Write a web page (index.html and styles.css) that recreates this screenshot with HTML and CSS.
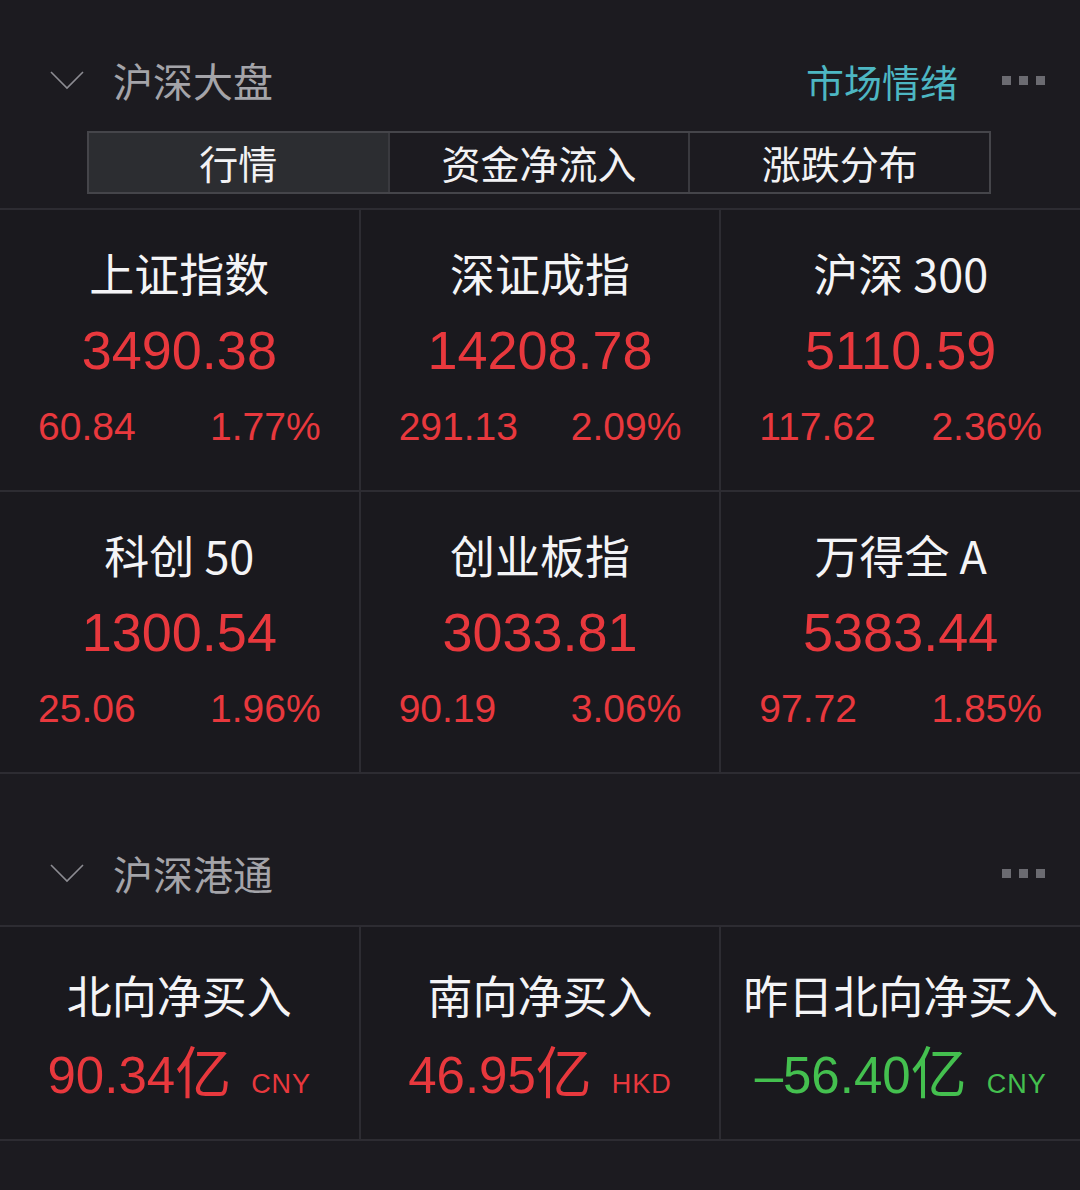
FILE: index.html
```html
<!DOCTYPE html>
<html lang="zh-CN">
<head>
    <meta charset="UTF-8">
    <title>沪深大盘</title>
    <link rel="stylesheet" href="styles.css">
</head>
<body>
<div class="sec-head first">
    <svg class="chev" width="34" height="20" viewBox="0 0 34 20"><polyline points="1,2 17,18 33,2" fill="none" stroke="#8c8c92" stroke-width="1.6"/></svg>
    <span class="sec-title">沪深大盘</span>
    <span class="sec-link">市场情绪</span>
    <span class="dots"><i></i><i></i><i></i></span>
</div>

<ul class="tabs">
    <li class="cur">行情</li>
    <li>资金净流入</li>
    <li>涨跌分布</li>
</ul>

<div class="grid">
    <div class="cell">
        <div class="name">上证指数</div>
        <div class="val">3490.38</div>
        <div class="sub"><span>60.84</span><span>1.77%</span></div>
    </div>
    <div class="cell">
        <div class="name">深证成指</div>
        <div class="val">14208.78</div>
        <div class="sub"><span>291.13</span><span>2.09%</span></div>
    </div>
    <div class="cell">
        <div class="name">沪深 300</div>
        <div class="val">5110.59</div>
        <div class="sub"><span>117.62</span><span>2.36%</span></div>
    </div>
    <div class="cell">
        <div class="name">科创 50</div>
        <div class="val">1300.54</div>
        <div class="sub"><span>25.06</span><span>1.96%</span></div>
    </div>
    <div class="cell">
        <div class="name">创业板指</div>
        <div class="val">3033.81</div>
        <div class="sub"><span>90.19</span><span>3.06%</span></div>
    </div>
    <div class="cell">
        <div class="name">万得全 A</div>
        <div class="val">5383.44</div>
        <div class="sub"><span>97.72</span><span>1.85%</span></div>
    </div>
</div>

<div class="sec-head second">
    <svg class="chev" width="34" height="20" viewBox="0 0 34 20"><polyline points="1,2 17,18 33,2" fill="none" stroke="#8c8c92" stroke-width="1.6"/></svg>
    <span class="sec-title">沪深港通</span>
    <span class="dots"><i></i><i></i><i></i></span>
</div>

<div class="grid flow">
    <div class="cell">
        <div class="name">北向净买入</div>
        <div class="amt">90.34<b>亿</b><small>CNY</small></div>
    </div>
    <div class="cell">
        <div class="name">南向净买入</div>
        <div class="amt">46.95<b>亿</b><small>HKD</small></div>
    </div>
    <div class="cell">
        <div class="name">昨日北向净买入</div>
        <div class="amt down">–56.40<b>亿</b><small>CNY</small></div>
    </div>
</div>
</body>
</html>
```

FILE: styles.css
```css
*{
    margin: 0;
    padding: 0;
}
body{
    width: 1080px;
    height: 1190px;
    background: #1c1b20;
    font-family: "Liberation Sans", "Noto Sans CJK SC", sans-serif;
    color: #f0f0f2;
    overflow: hidden;
}

/* 栏目标题 */
.sec-head{
    height: 60px;
    display: flex;
    align-items: center;
    padding: 0 35px 0 50px;
}
.sec-head.first{
    margin-top: 50px;
}
.sec-head.second{
    margin-top: 69px;
}
.chev{
    display: block;
    margin-right: 29px;
}
.sec-title{
    font-family: "Noto Sans CJK SC", sans-serif;
    font-size: 40px;
    color: #a4a4a9;
    flex: 1;
}
.sec-link{
    font-family: "Noto Sans CJK SC", sans-serif;
    font-size: 38px;
    color: #4db7c3;
    margin-right: 44px;
}
.dots{
    display: flex;
    gap: 8px;
}
.dots i{
    width: 9px;
    height: 9px;
    background: #6b6b71;
}

/* 切换标签 */
.tabs{
    list-style: none;
    display: flex;
    margin: 21px 89px 0 87px;
    height: 63px;
    border: 2px solid #45454a;
    box-sizing: border-box;
}
.tabs li{
    flex: 1;
    text-align: center;
    line-height: 59px;
    font-family: "Noto Sans CJK SC", sans-serif;
    font-size: 39px;
    color: #f2f2f4;
    border-left: 2px solid #3a3a3f;
}
.tabs li:first-child{
    border-left: none;
}
.tabs .cur{
    background: #2c2d31;
}

/* 指数格子 */
.grid{
    display: grid;
    grid-template-columns: repeat(3, 1fr);
    grid-auto-rows: 280px;
    gap: 2px;
    background: #2d2c32;
    border-top: 2px solid #2d2c32;
    border-bottom: 2px solid #2d2c32;
    margin-top: 14px;
}
.grid.flow{
    grid-auto-rows: 212px;
    margin-top: 22px;
}
.cell{
    background: #1a191e;
    text-align: center;
    padding-top: 35px;
}
.name{
    font-family: "Noto Sans CJK SC", sans-serif;
    font-size: 45px;
    line-height: 56px;
    color: #f4f4f6;
}
.val{
    font-size: 54px;
    line-height: 60px;
    margin-top: 19px;
    color: #e8383d;
}
.sub{
    display: flex;
    justify-content: space-between;
    padding: 0 38px;
    margin-top: 25px;
    font-size: 39px;
    line-height: 44px;
    color: #e8383d;
}
.grid.flow .cell{
    padding-top: 40px;
}
.amt{
    margin-top: 18px;
    font-size: 51px;
    line-height: 60px;
    color: #e8383d;
}
.amt b{
    font-family: "Noto Sans CJK SC", sans-serif;
    font-weight: normal;
    font-size: 56px;
    line-height: 1;
}
.amt small{
    font-size: 27px;
    margin-left: 20px;
    letter-spacing: 1px;
}
.amt.down{
    color: #44c04f;
}
```
